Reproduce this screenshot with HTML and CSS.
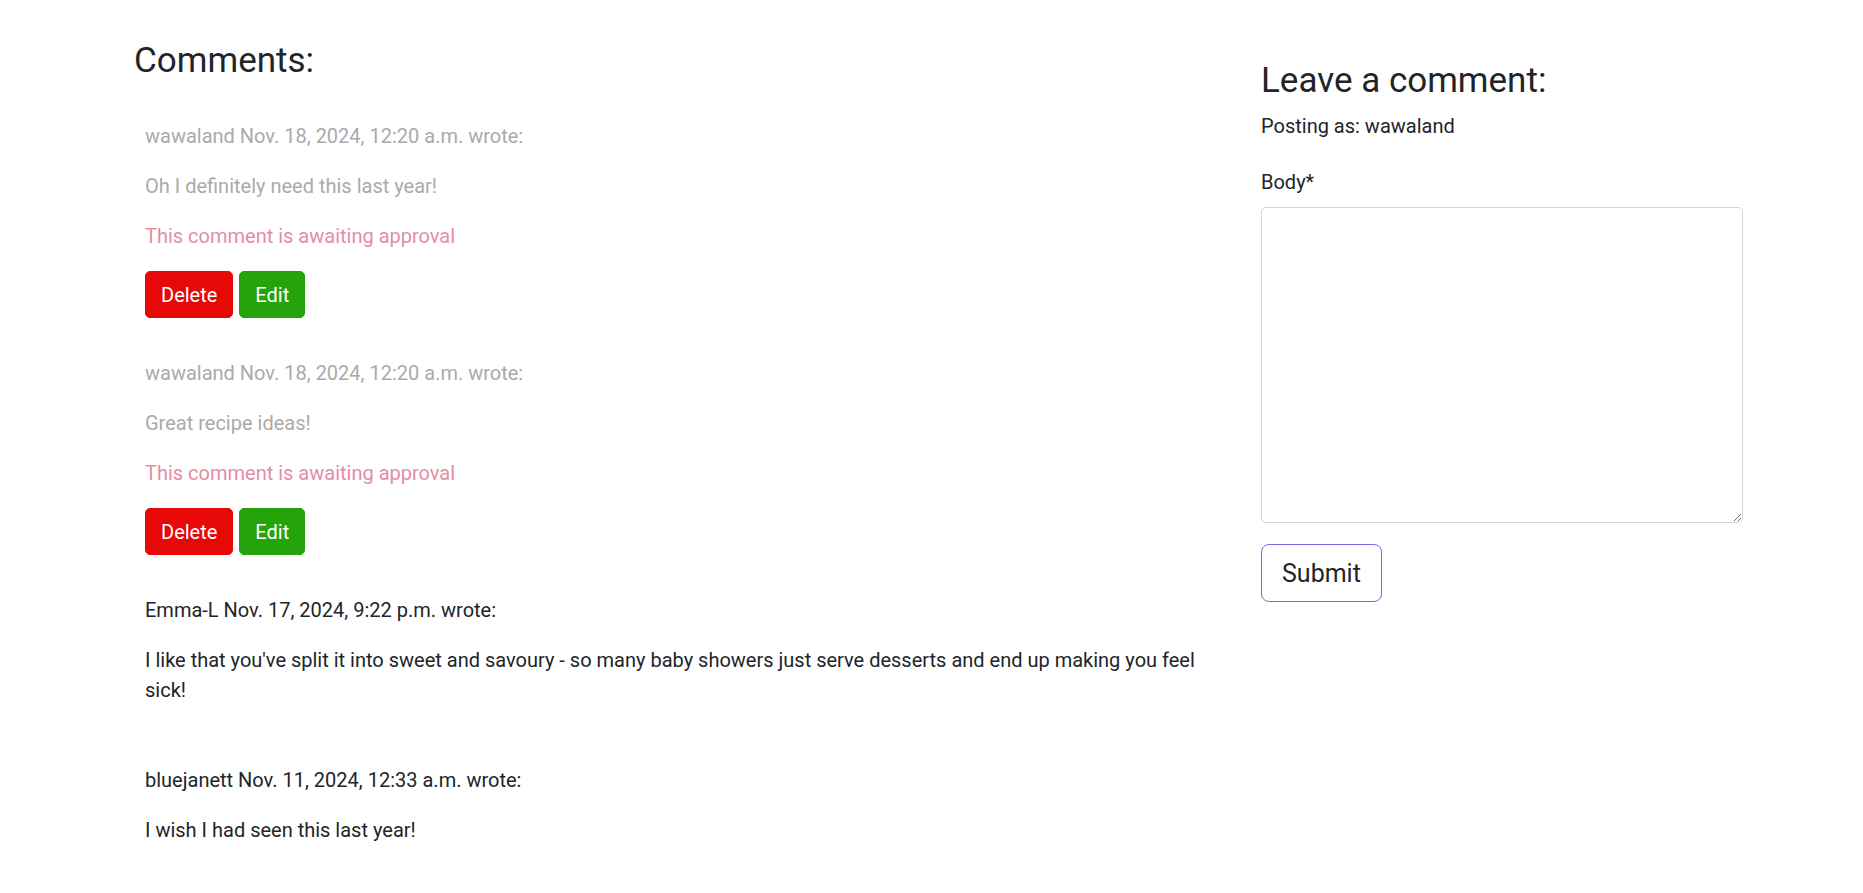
FILE: index.html
```html
<!DOCTYPE html>
<html lang="en">
<head>
<meta charset="utf-8">
<title>Comments</title>
<link rel="stylesheet" href="styles.css">
</head>
<body>
<div class="page">
  <section class="comments-col">
    <h3 class="heading">Comments:</h3>
    <div class="comment-list">
      <div class="comment faded">
        <p class="meta">wawaland Nov. 18, 2024, 12:20 a.m. wrote:</p>
        <p class="body">Oh I definitely need this last year!</p>
        <p class="approval">This comment is awaiting approval</p>
        <div class="actions">
          <button class="btn btn-delete">Delete</button>
          <button class="btn btn-edit">Edit</button>
        </div>
      </div>
      <div class="comment faded">
        <p class="meta">wawaland Nov. 18, 2024, 12:20 a.m. wrote:</p>
        <p class="body">Great recipe ideas!</p>
        <p class="approval">This comment is awaiting approval</p>
        <div class="actions">
          <button class="btn btn-delete">Delete</button>
          <button class="btn btn-edit">Edit</button>
        </div>
      </div>
      <div class="comment">
        <p class="meta">Emma-L Nov. 17, 2024, 9:22 p.m. wrote:</p>
        <p class="body">I like that you've split it into sweet and savoury - so many baby showers just serve desserts and end up making you feel sick!</p>
      </div>
      <div class="comment">
        <p class="meta">bluejanett Nov. 11, 2024, 12:33 a.m. wrote:</p>
        <p class="body">I wish I had seen this last year!</p>
      </div>
    </div>
  </section>
  <section class="form-col">
    <h3 class="heading form-heading">Leave a comment:</h3>
    <p class="posting">Posting as: wawaland</p>
    <form class="comment-form">
      <label class="label" for="body">Body*</label>
      <textarea id="body" class="textarea"></textarea>
      <button type="button" class="btn-submit">Submit</button>
    </form>
  </section>
</div>
</body>
</html>
```
FILE: styles.css
```css
* {
  box-sizing: border-box;
}

html, body {
  margin: 0;
  padding: 0;
  background: #ffffff;
}

body {
  font-family: Roboto, "Liberation Sans", Arial, sans-serif;
  font-size: 20px;
  line-height: 30px;
  color: #212529;
}

.page {
  display: flex;
  align-items: flex-start;
  padding: 40px 0 0 134px;
}

.comments-col {
  width: 1127px;
  flex: none;
}

.heading {
  margin: 0 0 10px;
  font-size: 35px;
  line-height: 42px;
  font-weight: 400;
}

.comment-list {
  display: flex;
  flex-direction: column;
  gap: 40px;
  margin-top: 39px;
  padding-left: 11px;
  width: 1091px;
}

.comment {
  display: flow-root;
}

.comment p {
  margin: 0 0 20px;
}

.faded .meta,
.faded .body {
  color: #aaaaaa;
}

.approval {
  color: #e38da6;
}

.actions {
  display: flex;
  gap: 6px;
}

.btn {
  font-family: inherit;
  font-size: 20px;
  line-height: 30px;
  padding: 7.5px 15px;
  border: 1px solid transparent;
  border-radius: 5px;
  color: #ffffff;
  cursor: pointer;
}

.btn-delete {
  background: #e70808;
  border-color: #e70808;
}

.btn-edit {
  background: #24a30b;
  border-color: #24a30b;
}

.form-col {
  width: 482px;
  flex: none;
  padding-top: 20px;
}

.form-heading {
  margin-bottom: 9px;
}

.posting {
  margin: 0 0 26px;
}

.comment-form {
  display: flex;
  flex-direction: column;
  align-items: flex-start;
}

.label {
  display: block;
  margin-bottom: 10px;
}

.textarea {
  display: block;
  width: 482px;
  height: 316px;
  border: 1px solid #d3d3da;
  border-radius: 5px;
  padding: 8px 15px;
  font-family: inherit;
  font-size: 20px;
  background: #ffffff;
  resize: vertical;
}

.btn-submit {
  margin-top: 21px;
  font-family: inherit;
  font-size: 25px;
  line-height: 37px;
  padding: 9.5px 20px;
  color: #212529;
  background: #ffffff;
  border: 1px solid #7b68e6;
  border-radius: 8px;
  cursor: pointer;
}
```
